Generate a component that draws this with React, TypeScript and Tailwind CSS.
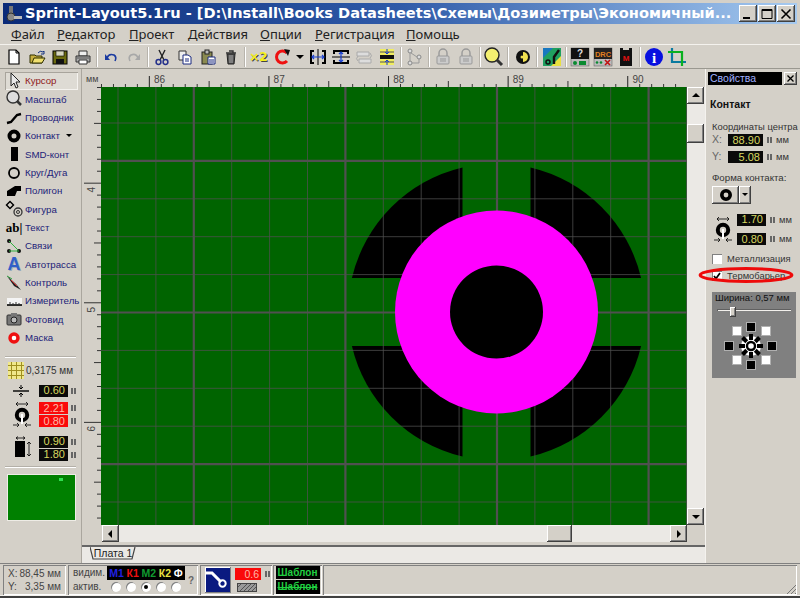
import React from "react";

const raised = "shadow-[inset_-1px_-1px_#404040,inset_1px_1px_#ffffff,inset_-2px_-2px_#808080]";
const sunken = "shadow-[inset_1px_1px_#808080,inset_-1px_-1px_#ffffff]";

function Ico({ w = 18, h = 18, children }: { w?: number; h?: number; children: React.ReactNode }) {
  return (
    <svg width={w} height={h} viewBox={`0 0 ${w} ${h}`} className="block shrink-0">
      {children}
    </svg>
  );
}

const NEW = <Ico><path d="M4 2h7l3 3v11H4z" fill="#fff" stroke="#000" strokeWidth="1.2" /><path d="M11 2v3h3" fill="none" stroke="#000" /></Ico>;
const OPEN = <Ico><path d="M2 7h5l1 1h6v7H2z" fill="#c8b040" stroke="#303000" /><path d="M4 15l2-5h11l-3 5z" fill="#f0e070" stroke="#303000" /><path d="M10 5q2-3 5-1l1-1v3h-3" fill="none" stroke="#103080" /></Ico>;
const SAVE = <Ico><rect x="2" y="3" width="14" height="13" fill="#6a6a10" stroke="#000" /><rect x="5" y="3" width="8" height="5" fill="#d8d8c0" stroke="#000" strokeWidth=".6" /><rect x="5" y="11" width="8" height="5" fill="#111" /></Ico>;
const PRINT = <Ico><path d="M5 3h8v5H5z" fill="#eee" stroke="#333" /><path d="M2 8h14v6H2z" fill="#aaa" stroke="#333" /><path d="M5 12h8v4H5z" fill="#fff" stroke="#333" /><path d="M3 10h12" stroke="#555" /></Ico>;
const UNDO = <Ico><path d="M5 10q2-5 7-3 3 2 1 6" fill="none" stroke="#1a3aa0" strokeWidth="1.6" /><path d="M3 6v6h5z" fill="#1a3aa0" /></Ico>;
const REDO = <Ico><path d="M13 10q-2-5-7-3-3 2-1 6" fill="none" stroke="#a8a8a8" strokeWidth="1.6" /><path d="M15 6v6h-5z" fill="#a8a8a8" /></Ico>;
const CUT = <Ico><path d="M6 2l5 10M12 2L7 12" stroke="#222" strokeWidth="1.4" /><circle cx="5.5" cy="14" r="2.4" fill="none" stroke="#24308a" strokeWidth="1.5" /><circle cx="12.5" cy="14" r="2.4" fill="none" stroke="#24308a" strokeWidth="1.5" /></Ico>;
const COPY = <Ico><path d="M3 3h7v9H3z" fill="#eee" stroke="#333" /><path d="M7 7h5l3 2v7H7z" fill="#fff" stroke="#1a2a80" /><path d="M9 11h4M9 13h4" stroke="#1a2a80" /></Ico>;
const PASTE = <Ico><rect x="3" y="4" width="10" height="12" fill="#8a8a50" stroke="#222" /><rect x="6" y="2" width="4" height="4" fill="#bbb" stroke="#222" /><path d="M9 9h7v7H9z" fill="#fff" stroke="#1a2a80" /><path d="M10 12h5M10 14h5" stroke="#1a2a80" /></Ico>;
const TRASH = <Ico><path d="M4 5h10M7 3h4v2" stroke="#333" strokeWidth="1.4" fill="none" /><path d="M5 6h8l-1 10H6z" fill="#555" stroke="#222" /><path d="M8 7v8M10 7v8" stroke="#aaa" /></Ico>;
const X2 = <span className="font-['DejaVu_Sans',sans-serif] font-bold text-[12px] leading-none text-[#f4f020] [text-shadow:1px_1px_0_#444]">×2</span>;
const ROTATE = <Ico><path d="M14 5A6 6 0 1 0 14 13" fill="none" stroke="#ee1010" strokeWidth="3" /><path d="M11 1l6 1-2 6z" fill="#111" /></Ico>;
const MIRH = <Ico w={20}><path d="M6 3H3v12h3M14 3h3v12h-3" fill="none" stroke="#000" strokeWidth="2" /><path d="M10 1v16" stroke="#000" /><path d="M4 9h12M6 7L4 9l2 2M14 7l2 2-2 2" fill="none" stroke="#1a40d0" strokeWidth="1.2" /></Ico>;
const MIRV = <Ico w={20}><path d="M3 6V3h14v3M3 12v3h14v-3" fill="none" stroke="#000" strokeWidth="2" /><path d="M1 9h18" stroke="#000" /><path d="M10 4v10M8 6l2-2 2 2M8 12l2 2 2-2" fill="none" stroke="#1a40d0" strokeWidth="1.2" /></Ico>;
const ROTG = <Ico w={20}><path d="M3 4h12v4H3zM5 11h12v4H5z" fill="#ddd" stroke="#aaa" /><path d="M16 5q3 3 0 5M4 13q-3-2 0-5" fill="none" stroke="#aaa" /></Ico>;
const ALIGN = <Ico w={20}><rect x="3" y="1" width="14" height="16" fill="#f0ec60" /><path d="M3 4h14M3 14h14" stroke="#555" /><rect x="3" y="7" width="14" height="4" fill="#111" /><path d="M10 1v5M8 4l2 2 2-2M10 17v-5M8 14l2-2 2 2" fill="none" stroke="#1a40d0" /></Ico>;
const GRAPH = <Ico><circle cx="4" cy="3" r="2" fill="#ddd" stroke="#888" /><circle cx="4" cy="15" r="2" fill="#ddd" stroke="#888" /><circle cx="13" cy="9" r="2" fill="#ddd" stroke="#888" /><path d="M4 5v8M5 5l6 4M6 15h7v-4" fill="none" stroke="#999" /></Ico>;
const LOCK1 = <Ico><path d="M5 8V5a4 4 0 0 1 8 0v3" fill="none" stroke="#999" strokeWidth="1.4" /><rect x="3" y="8" width="12" height="8" rx="1" fill="#ccc" stroke="#999" /><path d="M6 11h6M6 13h6" stroke="#999" /></Ico>;
const LENS = <Ico w={20} h={20}><circle cx="8" cy="8" r="7" fill="#f4f070" stroke="#222" strokeWidth="1.4" /><path d="M13 13l5 5" stroke="#333" strokeWidth="3" /></Ico>;
const HALF = <Ico><circle cx="9" cy="9" r="7" fill="#111" /><path d="M9 4a5 5 0 0 1 0 10z" fill="#f0e050" /><circle cx="8" cy="9" r="1.5" fill="#f0e050" /></Ico>;
const MAP = <Ico w={20} h={20}><rect x="1" y="1" width="18" height="18" fill="#20a060" /><path d="M1 1h10L1 11z" fill="#1878c0" /><path d="M19 19H9l10-10z" fill="#e8e040" /><path d="M17 3l-5 7v7" fill="none" stroke="#111" strokeWidth="2.4" /><circle cx="6" cy="15" r="2" fill="none" stroke="#111" strokeWidth="1.5" /></Ico>;
const DRCQ = <Ico w={20} h={20}><rect x="1" y="1" width="18" height="18" fill="#bbb" stroke="#555" strokeWidth=".5" /><rect x="1" y="1" width="18" height="11" fill="#111" /><text x="10" y="10" textAnchor="middle" fontSize="10" fontWeight="700" fill="#ddd" fontFamily="Liberation Sans">?</text><circle cx="5" cy="16" r="2" fill="#0a8a30" /><rect x="9" y="14" width="7" height="4" fill="#0a8a30" /></Ico>;
const DRC = <Ico w={20} h={20}><rect x="1" y="1" width="18" height="18" fill="#bbb" stroke="#555" strokeWidth=".5" /><rect x="1" y="1" width="18" height="11" fill="#222" /><text x="10" y="9.5" textAnchor="middle" fontSize="7.5" fontWeight="700" fill="#e08020" fontFamily="Liberation Sans">DRC</text><circle cx="4" cy="15.5" r="1.3" fill="#0a8a30" /><circle cx="8" cy="15.5" r="1.3" fill="#0a8a30" /><path d="M12 13l5 5M17 13l-5 5" stroke="#c01010" strokeWidth="1.6" /></Ico>;
const MASKM = <Ico w={14} h={20}><path d="M1 1h3v2h6V1h3v18H1z" fill="#111" /><text x="7" y="14" textAnchor="middle" fontSize="8" fontWeight="700" fill="#e01010" fontFamily="Liberation Sans">M</text></Ico>;
const INFO = <Ico w={20} h={20}><circle cx="10" cy="10" r="9" fill="#0810e0" /><text x="10" y="16" textAnchor="middle" fontSize="15" fontWeight="700" fill="#fff" fontFamily="Liberation Serif">i</text></Ico>;
const CROP = <Ico w={20} h={20}><path d="M5 1v14h14" fill="none" stroke="#0a7aa0" strokeWidth="2.2" /><path d="M1 5h14v14" fill="none" stroke="#0ab020" strokeWidth="2.2" /></Ico>;

type TB = { s?: string; i?: React.ReactNode };
const toolbar: TB[] = [
  { i: NEW }, { i: OPEN }, { i: SAVE }, { i: PRINT }, { s: "w-[5px]" },
  { i: UNDO }, { i: REDO }, { s: "w-[5px]" },
  { i: CUT }, { i: COPY }, { i: PASTE }, { i: TRASH }, { s: "w-[5px]" },
  { i: X2 }, { i: ROTATE }, { s: "drop" },
  { i: MIRH }, { i: MIRV }, { i: ROTG }, { i: ALIGN }, { s: "w-[5px]" },
  { i: GRAPH }, { s: "w-[5px]" },
  { i: LOCK1 }, { i: LOCK1 }, { s: "w-[5px]" },
  { i: LENS }, { s: "w-[6px]" },
  { i: HALF }, { s: "w-[6px]" },
  { i: MAP }, { s: "w-[5px]" },
  { i: DRCQ }, { i: DRC }, { i: MASKM }, { s: "w-[5px]" },
  { i: INFO }, { i: CROP },
];

const tools: { t: string; i: React.ReactNode }[] = [
  { t: "Курсор", i: <Ico><path d="M6 1v13l3-3 2 5 2-1-2-5h4z" fill="#e8e8e8" stroke="#222" /></Ico> },
  { t: "Масштаб", i: <Ico><circle cx="8" cy="7" r="6" fill="#ddd" stroke="#333" strokeWidth="1.4" /><path d="M12 11l4 4" stroke="#333" strokeWidth="2.5" /></Ico> },
  { t: "Проводник", i: <Ico><path d="M2 14l4-1 6-7 4-1" fill="none" stroke="#000" strokeWidth="2.4" /></Ico> },
  { t: "Контакт", i: <Ico><circle cx="9" cy="9" r="4.5" fill="none" stroke="#000" strokeWidth="4" /></Ico> },
  { t: "SMD-конт", i: <Ico><rect x="6" y="2" width="7" height="14" fill="#000" /></Ico> },
  { t: "Круг/Дуга", i: <Ico><circle cx="9" cy="9" r="5" fill="none" stroke="#000" strokeWidth="1.8" /></Ico> },
  { t: "Полигон", i: <Ico><path d="M2 14V9l8-5h6v5h-4l-2 5z" fill="#000" /></Ico> },
  { t: "Фигура", i: <Ico><rect x="2.5" y="2.5" width="5" height="5" transform="rotate(45 5 5)" fill="none" stroke="#000" strokeWidth="1.4" /><circle cx="13" cy="12" r="4" fill="none" stroke="#333" strokeWidth="1.3" /><circle cx="13" cy="12" r="1.5" fill="none" stroke="#333" /></Ico> },
  { t: "Текст", i: <span className="font-['Liberation_Serif',serif] font-bold text-[13px] leading-none text-black">ab|</span> },
  { t: "Связи", i: <Ico><circle cx="4" cy="4" r="2" fill="#111" /><circle cx="4" cy="14" r="2" fill="#111" /><circle cx="14" cy="14" r="2" fill="#111" /><path d="M4 4l9 9M4 14h10" stroke="#30b040" /></Ico> },
  { t: "Автотрасса", i: <span className="font-['Liberation_Sans',sans-serif] font-bold text-[18px] leading-none text-[#3060c8] [text-shadow:1px_1px_0_#9ab]">A</span> },
  { t: "Контроль", i: <Ico><path d="M2 2l9 8 5 6-7-4z" fill="#222" /><path d="M6 6l6 6" stroke="#d03030" /><path d="M2 2l5 3" stroke="#30a040" /></Ico> },
  { t: "Измеритель", i: <Ico w={17}><rect x="1" y="6" width="15" height="7" fill="#f4f4f4" /><path d="M1 13h15" stroke="#000" strokeWidth="1.6" /><path d="M4 13v-3M7 13v-2M10 13v-3M13 13v-2" stroke="#333" /></Ico> },
  { t: "Фотовид", i: <Ico><rect x="2" y="5" width="14" height="10" rx="1" fill="#777" stroke="#333" /><rect x="6" y="3" width="6" height="3" fill="#777" /><circle cx="9" cy="10" r="3" fill="#bbb" stroke="#222" /></Ico> },
  { t: "Маска", i: <Ico><circle cx="9" cy="9" r="4" fill="#fff" stroke="#ee1010" strokeWidth="3.4" /></Ico> },
];

function Dots() {
  return (
    <span className="flex gap-[1px] shrink-0">
      <span className="w-[2px] h-[6px] bg-[#666]" />
      <span className="w-[2px] h-[6px] bg-[#666]" />
    </span>
  );
}

function Val({ v, red, w = "w-[29px]" }: { v: string; red?: boolean; w?: string }) {
  return (
    <div className={`${w} h-[12px] flex items-center justify-end pr-[3px] text-[11px] leading-none ${red ? "bg-[#fa0a0a] text-[#ffb8a8]" : "bg-[#0a0a0a] text-[#d8d860]"}`}>
      {v}
    </div>
  );
}

function DonutIcon({ w = 18, h = 28 }: { w?: number; h?: number }) {
  return (
    <Ico w={w} h={h}>
      <path d="M3 3h12M3 3l2-2M3 3l2 2M15 3l-2-2M15 3l-2 2" fill="none" stroke="#000" strokeWidth=".8" />
      <circle cx="9" cy="14" r="5.2" fill="none" stroke="#000" strokeWidth="4" />
      <rect x="8" y="13" width="2" height="10" fill="#fff" />
      <path d="M0 24h6M6 24l-2-2M6 24l-2 2M18 24h-6M12 24l2-2M12 24l2 2" fill="none" stroke="#000" strokeWidth=".8" />
    </Ico>
  );
}

function Ruler() {
  const ticks = Array.from({ length: 49 }, (_, i) => i);
  return (
    <svg width={624} height={18} className="block shrink-0">
      <text x={4} y={13} fontSize="9" fill="#444" fontFamily="Liberation Sans">мм</text>
      {ticks.map((i) => {
        const x = 20 + i * 11.96 - 0.5;
        const k = i - 4;
        const major = k >= 0 && k % 10 === 0;
        const med = ((k % 10) + 10) % 10 === 5;
        return <line key={i} x1={x} x2={x} y1={major ? 7 : med ? 12 : 15} y2={18} stroke={major ? "#222" : "#333"} />;
      })}
      {[86, 87, 88, 89, 90].map((m, i) => (
        <text key={m} x={69 + i * 119.6 + 3} y={14} fontSize="10" fill="#444" fontFamily="Liberation Sans">{m}</text>
      ))}
    </svg>
  );
}

function VRuler() {
  const ticks = Array.from({ length: 37 }, (_, i) => i);
  return (
    <svg width={19} height={438} className="block shrink-0">
      {ticks.map((i) => {
        const y = 0.5 + i * 11.96;
        const k = i - 2 - 6;
        const mod = ((k % 10) + 10) % 10;
        const major = mod === 0;
        const med = mod === 5;
        return <line key={i} x1={major ? 2 : med ? 12 : 15} x2={19} y1={y} y2={y} stroke="#333" />;
      })}
      {[{ l: "4", y: 96 }, { l: "5", y: 216 }, { l: "6", y: 335 }].map((o) => (
        <text key={o.l} x={0} y={0} fontSize="10" fill="#444" fontFamily="Liberation Sans" textAnchor="end" transform={`translate(13 ${o.y + 4}) rotate(-90)`}>{o.l}</text>
      ))}
    </svg>
  );
}

function Board() {
  const cx = 395.5;
  const cy = 225;
  const vs = Array.from({ length: 16 }, (_, i) => 17 + i * 37.9);
  const hs = Array.from({ length: 12 }, (_, i) => 36 + i * 37.9);
  return (
    <svg width={586} height={438} className="block shrink-0 bg-[#006400]">
      <g transform={`translate(${cx} ${cy})`} fill="#000">
        {[0, 90, 180, 270].map((r) => (
          <path key={r} transform={`rotate(${r})`} d="M-34 -34V-144.6A148.5 148.5 0 0 0 -144.6 -34Z" />
        ))}
      </g>
      {vs.map((x, i) => (
        <line key={i} x1={x} x2={x} y1={0} y2={438} stroke="#505050" strokeOpacity={i % 4 === 2 ? 1 : 0.75} strokeWidth={i % 4 === 2 ? 2.2 : 1} />
      ))}
      {hs.map((y, i) => (
        <line key={i} y1={y} y2={y} x1={0} x2={586} stroke="#505050" strokeOpacity={i % 4 === 1 ? 1 : 0.75} strokeWidth={i % 4 === 1 ? 2.2 : 1} />
      ))}
      <circle cx={cx} cy={cy} r={101.5} fill="#ff00ff" />
      <circle cx={cx} cy={cy} r={46.5} fill="#000" />
    </svg>
  );
}

function Arrow({ d }: { d: "up" | "down" | "left" | "right" }) {
  const p = { up: "M1 6L5 2l4 4z", down: "M1 3h8L5 7z", left: "M6 1v8L2 5z", right: "M3 1v8l4-4z" }[d];
  return <svg width={10} height={10} viewBox="0 0 10 10"><path d={p} fill="#000" /></svg>;
}

function ThermalPanel() {
  const pads: [number, number, boolean][] = [
    [39, 35, true], [54, 39, false], [60, 54, true], [54, 68, false],
    [39, 73, true], [25, 68, false], [17, 54, true], [25, 39, false],
  ];
  return (
    <svg width={84} height={62} viewBox="0 24 84 62" className="block">
      {pads.map(([x, y, b], i) => (
        <g key={i}>
          <rect x={x - 5} y={y - 5} width={10} height={10} fill="#b0b0b0" />
          <rect x={x - 4} y={y - 4} width={8} height={8} fill={b ? "#000" : "#fff"} />
        </g>
      ))}
      <circle cx={39} cy={54} r={10} fill="#fff" />
      {Array.from({ length: 8 }, (_, i) => (
        <rect key={i} x={37} y={42} width={4} height={6} fill="#000" transform={`rotate(${i * 45} 39 54)`} />
      ))}
      <circle cx={39} cy={54} r={4} fill="none" stroke="#000" strokeWidth="2.4" />
    </svg>
  );
}

export default function App() {
  return (
    <div className="w-[800px] h-[598px] bg-[#d4d0c8] flex flex-col overflow-hidden font-['Liberation_Sans',sans-serif] text-black">
      {/* title bar */}
      <div className="mx-[3px] mt-[3px] h-[21px] shrink-0 flex items-center bg-gradient-to-r from-[#0a2a78] via-[#2f5aa8] to-[#a6caf0]">
        <div className="w-[21px] shrink-0 pl-[2px]">
          <Ico w={18} h={18}>
            <rect x="4" y="1" width="4" height="10" fill="#777" />
            <circle cx="6" cy="12" r="4" fill="#888" stroke="#333" />
            <rect x="9" y="11" width="8" height="3" fill="#bbb" />
          </Ico>
        </div>
        <div className="flex-1 min-w-0 whitespace-nowrap font-['DejaVu_Sans',sans-serif] font-bold text-[14.6px] leading-none text-white pl-[1px]">
          Sprint-Layout5.1ru - [D:\Install\Books Datasheets\Схемы\Дозиметры\Экономичный...
        </div>
        <div className="flex gap-[1px] pr-[2px] shrink-0">
          {["min", "max", "close"].map((b) => (
            <div key={b} className={`w-[18px] h-[17px] bg-[#d4d0c8] flex items-center justify-center ${raised}`}>
              <svg width={12} height={12} viewBox="0 0 12 12">
                {b === "min" && <rect x="1" y="9" width="7" height="2" fill="#000" />}
                {b === "max" && <path d="M1 1.5h10v9H1zM1 2.5h10" fill="none" stroke="#000" />}
                {b === "close" && <path d="M1.5 1.5l9 9M10.5 1.5l-9 9" stroke="#000" strokeWidth="1.6" />}
              </svg>
            </div>
          ))}
        </div>
      </div>

      {/* menu */}
      <div className="h-[20px] shrink-0 flex items-center pl-[11px] text-[13px] leading-none text-[#222] font-['Noto_Sans',sans-serif]">
        {[
          ["Ф", "айл", "w-[46px]"], ["Р", "едактор", "w-[72px]"], ["П", "роект", "w-[59px]"], ["Д", "ействия", "w-[72px]"],
          ["О", "пции", "w-[55px]"], ["Р", "егистрация", "w-[91px]"], ["П", "омощь", "w-[60px]"],
        ].map(([a, b, w]) => (
          <div key={a + b} className={`${w} shrink-0 whitespace-nowrap`}><span className="underline">{a}</span>{b}</div>
        ))}
      </div>

      {/* toolbar */}
      <div className="h-[25px] shrink-0 flex items-center pl-[2px] border-t border-t-[#f4f2ee] border-b border-b-[#9a9890]">
        {toolbar.map((t, i) =>
          t.s === "drop" ? (
            <div key={i} className="w-[13px] h-[22px] flex items-center justify-center"><Arrow d="down" /></div>
          ) : t.s ? (
            <div key={i} className={`${t.s} h-[20px] flex justify-center`}><div className="w-[2px] h-full bg-[#b8b4ac] border-r border-r-white" /></div>
          ) : (
            <div key={i} className="w-[23px] h-[22px] flex items-center justify-center">{t.i}</div>
          )
        )}
      </div>

      {/* main */}
      <div className="flex h-[494px] shrink-0">
        {/* left */}
        <div className="w-[82px] shrink-0 flex flex-col pt-[3px] border-r border-r-[#aaa69e]">
          <div className="flex flex-col pl-[5px] pr-[3px]">
            {tools.map((t, i) => (
              <div key={t.t} className={`h-[18.33px] flex items-center text-[9.7px] leading-none whitespace-nowrap ${i === 0 ? "bg-[#dedbd4] text-[#902020] shadow-[inset_1px_1px_#a8a49c,inset_-1px_-1px_#f4f2ee]" : "text-[#1c1c78]"}`}>
                <div className="w-[20px] pr-[2px] h-full shrink-0 flex items-center justify-center">{t.i}</div>
                <span>{t.t}</span>
                {t.t === "Контакт" && <span className="ml-[6px]"><svg width={6} height={4}><path d="M0 0h6L3 3z" fill="#000" /></svg></span>}
              </div>
            ))}
          </div>
          <div className="mx-[5px] mt-[9px] h-[2px] bg-[#b4b0a8] border-b border-b-white shrink-0" />
          <div className="flex items-center mt-[4px] pl-[8px] h-[17px] text-[10px] text-[#333]">
            <svg width={16} height={17} className="shrink-0">
              <rect width={16} height={17} fill="#f0e88a" />
              <path d="M0 3.5h16M0 8.5h16M0 13.5h16M3.5 0v17M8.5 0v17M13.5 0v17" stroke="#a09020" />
            </svg>
            <span className="ml-[2px] whitespace-nowrap">0,3175 мм</span>
          </div>
          <div className="flex items-center mt-[6px] pl-[13px]">
            <div className="w-[26px] shrink-0">
              <Ico w={16} h={12}>
                <path d="M0 6h16" stroke="#000" strokeWidth="1.4" />
                <path d="M8 0v4M6 2l2 2 2-2M8 12V8M6 10l2-2 2 2" fill="none" stroke="#000" />
              </Ico>
            </div>
            <Val v="0.60" />
            <span className="ml-[3px]"><Dots /></span>
          </div>
          <div className="flex items-center mt-[4px] pl-[13px]">
            <div className="w-[26px] shrink-0"><DonutIcon /></div>
            <div className="flex flex-col gap-[1px]">
              <div className="flex items-center"><Val v="2.21" red /><span className="ml-[3px]"><Dots /></span></div>
              <div className="flex items-center"><Val v="0.80" red /><span className="ml-[3px]"><Dots /></span></div>
            </div>
          </div>
          <div className="flex items-center mt-[7px] pl-[14px]">
            <div className="w-[25px] shrink-0">
              <Ico w={18} h={24}>
                <path d="M2 2h9M2 2l2-1.5M2 2l2 1.5M11 2L9 .5M11 2L9 3.5" fill="none" stroke="#000" strokeWidth=".8" />
                <rect x="1" y="5" width="10" height="16" fill="#000" />
                <path d="M15 6v14M13 8l2-2 2 2M13 18l2 2 2-2" fill="none" stroke="#000" strokeWidth=".8" />
              </Ico>
            </div>
            <div className="flex flex-col gap-[1px]">
              <div className="flex items-center"><Val v="0.90" /><span className="ml-[3px]"><Dots /></span></div>
              <div className="flex items-center"><Val v="1.80" /><span className="ml-[3px]"><Dots /></span></div>
            </div>
          </div>
          <div className="mx-[5px] mt-[5px] h-[2px] bg-[#b4b0a8] border-b border-b-white shrink-0" />
          <div className="ml-[7px] mt-[6px] w-[69px] h-[47px] bg-[#008000] border border-[#eeece6] flex justify-end shrink-0">
            <div className="w-[4px] h-[3px] mt-[3px] mr-[12px] bg-[#30e050]" />
          </div>
        </div>

        {/* middle */}
        <div className="w-[623px] shrink-0 flex flex-col">
          <Ruler />
          <div className="flex h-[438px] shrink-0">
            <VRuler />
            <Board />
            <div className="w-[18px] shrink-0 bg-[#ebe9e5] flex flex-col justify-between">
              <div className="flex flex-col">
                <div className={`w-[17px] h-[17px] bg-[#d4d0c8] flex items-center justify-center ${raised}`}><Arrow d="up" /></div>
                <div className={`mt-[20px] w-[17px] h-[19px] bg-[#d4d0c8] ${raised}`} />
              </div>
              <div className={`w-[17px] h-[17px] bg-[#d4d0c8] flex items-center justify-center ${raised}`}><Arrow d="down" /></div>
            </div>
          </div>
          <div className="flex h-[17px] shrink-0">
            <div className="w-[20px] shrink-0" />
            <div className="w-[585px] shrink-0 bg-[#ebe9e5] flex justify-between">
              <div className={`w-[17px] h-[17px] bg-[#d4d0c8] flex items-center justify-center ${raised}`}><Arrow d="left" /></div>
              <div className="flex">
                <div className={`w-[25px] h-[17px] bg-[#d4d0c8] mr-[98px] ${raised}`} />
                <div className={`w-[17px] h-[17px] bg-[#d4d0c8] flex items-center justify-center ${raised}`}><Arrow d="right" /></div>
              </div>
            </div>
          </div>
          <div className="h-[3px] shrink-0" />
          <div className="h-[18px] shrink-0 bg-[#ebe9e5] border-t-2 border-t-[#666] pl-[8px]">
            <div className="relative w-[46px] h-[13px] text-[10.5px] leading-[12px] text-[#222] text-center whitespace-nowrap">
              Плата 1
              <svg width={46} height={13} className="absolute left-0 top-0">
                <path d="M0 0l3 12h39l3-12" fill="none" stroke="#444" strokeWidth="1.2" />
              </svg>
            </div>
          </div>
        </div>

        {/* right */}
        <div className="flex-1 min-w-0 flex flex-col pt-[3px] border-l border-l-[#f4f2ee] text-[9.4px] text-[#333] relative">
          <div className="flex items-center pl-[2px] h-[13px] shrink-0">
            <div className="w-[74px] h-[13px] bg-black text-[#a0b0ff] text-[10.5px] leading-[13px] pl-[2px]">Свойства</div>
            <div className={`ml-[2px] w-[13px] h-[13px] flex items-center justify-center ${raised}`}>
              <svg width={7} height={7}><path d="M.5.5l6 6M6.5.5l-6 6" stroke="#000" strokeWidth="1.3" /></svg>
            </div>
          </div>
          <div className="mt-[13px] h-[12px] pl-[4px] font-bold text-[10.5px] leading-[12px] text-[#111]">Контакт</div>
          <div className="mt-[11px] h-[12px] pl-[6px] leading-[12px] whitespace-nowrap">Координаты центра</div>
          <div className="mt-[1px] flex items-center pl-[6px] h-[12px]">
            <span className="w-[16px] text-[#666] text-[10.5px]">X:</span>
            <Val v="88.90" w="w-[35px]" />
            <span className="ml-[4px]"><Dots /></span>
            <span className="ml-[4px]">мм</span>
          </div>
          <div className="mt-[5px] flex items-center pl-[6px] h-[12px]">
            <span className="w-[16px] text-[#666] text-[10.5px]">Y:</span>
            <Val v="5.08" w="w-[35px]" />
            <span className="ml-[4px]"><Dots /></span>
            <span className="ml-[4px]">мм</span>
          </div>
          <div className="mt-[9px] h-[12px] pl-[6px] leading-[12px] text-[9.7px]">Форма контакта:</div>
          <div className="mt-[2px] ml-[6px] flex h-[18px]">
            <div className={`w-[27px] h-[18px] flex items-center justify-center ${raised}`}>
              <svg width={14} height={14}><circle cx={7} cy={7} r={4.2} fill="none" stroke="#000" strokeWidth="3.6" /></svg>
            </div>
            <div className={`w-[12px] h-[18px] flex items-center justify-center ${raised}`}>
              <svg width={6} height={4}><path d="M0 0h6L3 3z" fill="#000" /></svg>
            </div>
          </div>
          <div className="mt-[11px] flex pl-[8px] h-[29px] items-center">
            <div className="w-[23px] shrink-0"><DonutIcon /></div>
            <div className="flex flex-col gap-[5px]">
              <div className="flex items-center"><Val v="1.70" /><span className="ml-[4px]"><Dots /></span><span className="ml-[4px]">мм</span></div>
              <div className="flex items-center"><Val v="0.80" /><span className="ml-[4px]"><Dots /></span><span className="ml-[4px]">мм</span></div>
            </div>
          </div>
          <div className="mt-[9px] flex items-center pl-[6px] h-[12px]">
            <div className={`w-[10px] h-[10px] bg-white ${sunken}`} />
            <span className="ml-[5px] whitespace-nowrap">Металлизация</span>
          </div>
          <div className="mt-[5px] flex items-center pl-[6px] h-[12px]">
            <div className={`w-[10px] h-[10px] bg-white flex items-center justify-center ${sunken}`}>
              <svg width={8} height={8}><path d="M1 4l2 2.5L7 1" fill="none" stroke="#000" strokeWidth="1.7" /></svg>
            </div>
            <span className="ml-[5px] whitespace-nowrap">Термобарьер</span>
          </div>
          <svg width={96} height={17} className="absolute left-[-8px] top-[198px] overflow-visible">
            <ellipse cx={48} cy={8} rx={46} ry={6.5} fill="none" stroke="#ee0a0a" strokeWidth="3" />
          </svg>
          <div className="mt-[10px] ml-[6px] w-[84px] h-[86px] bg-[#808080] flex flex-col">
            <div className="h-[12px] pl-[3px] leading-[12px] text-[9.5px] text-[#101010] whitespace-nowrap">Ширина: 0,57 мм</div>
            <div className="mt-[5px] mx-[5px] h-[5px] bg-[#f2f0ec] relative shadow-[inset_1px_1px_#606060]">
              <div className={`absolute left-[13px] top-[-2px] w-[6px] h-[10px] bg-[#d4d0c8] ${raised}`} />
            </div>
            <div className="mt-[5px]"><ThermalPanel /></div>
          </div>
        </div>
      </div>

      {/* status */}
      <div className="h-[32px] shrink-0 flex border-t border-t-[#808080] pt-[1px] text-[10px] text-[#444]">
        <div className={`w-[63px] ml-[3px] flex flex-col justify-center px-[5px] ${sunken}`}>
          <div className="flex justify-between h-[13px] leading-[13px] whitespace-nowrap"><span>X:</span><span>88,45 мм</span></div>
          <div className="flex justify-between h-[13px] leading-[13px] whitespace-nowrap"><span>Y:</span><span>3,35 мм</span></div>
        </div>
        <div className={`w-[130px] ml-[2px] flex items-center pl-[5px] ${sunken}`}>
          <div className="w-[34px] shrink-0">
            <div className="h-[14px] leading-[14px]">видим.</div>
            <div className="h-[14px] leading-[14px]">актив.</div>
          </div>
          <div className="flex flex-col">
            <div className="w-[78px] h-[14px] bg-black flex items-center justify-around px-[1px] text-[10.5px] font-bold leading-none">
              <span className="text-[#2020e0]">М1</span>
              <span className="text-[#f01010]">К1</span>
              <span className="text-[#109a30]">М2</span>
              <span className="text-[#e8e040]">К2</span>
              <span className="text-white">Ф</span>
            </div>
            <div className="w-[78px] h-[14px] flex items-center justify-around px-[1px]">
              {[0, 1, 2, 3, 4].map((i) => (
                <div key={i} className="w-[10px] h-[10px] rounded-full bg-white flex items-center justify-center shadow-[inset_1px_1px_#808080]">
                  {i === 2 && <div className="w-[4px] h-[4px] rounded-full bg-black" />}
                </div>
              ))}
            </div>
          </div>
          <span className="ml-[3px] font-bold text-[#666]">?</span>
        </div>
        <div className={`w-[72px] ml-[2px] flex items-center pl-[5px] ${sunken}`}>
          <div className="p-[1px] shadow-[inset_-1px_-1px_#808080,inset_1px_1px_#ffffff]">
            <svg width={24} height={24} className="block">
              <rect width={24} height={24} fill="#0a1a80" />
              <path d="M0 5h6l9 9" fill="none" stroke="#fff" strokeWidth="3" />
              <circle cx={16.5} cy={15.5} r={3.2} fill="none" stroke="#fff" strokeWidth="2" />
            </svg>
          </div>
          <div className="ml-[4px] flex flex-col gap-[3px]">
            <div className="flex items-center">
              <div className="w-[26px] h-[12px] bg-[#fa0a0a] text-[#ffb8a8] text-[10.5px] leading-[12px] text-right pr-[2px]">0.6</div>
              <span className="ml-[4px]"><Dots /></span>
            </div>
            <svg width={20} height={9} className="ml-[2px]">
              <rect width={20} height={9} fill="#999" />
              <path d="M-2 7l7-7M2 9l9-9M6 9l9-9M10 9l9-9M14 9l8-8" stroke="#333" strokeWidth=".7" />
              <rect x=".5" y=".5" width={19} height={8} fill="none" stroke="#444" />
            </svg>
          </div>
        </div>
        <div className={`w-[49px] ml-[1px] flex flex-col justify-center items-center gap-[1px] ${sunken}`}>
          <div className="w-[44px] h-[13px] bg-black text-[#20d040] text-[10px] font-bold leading-[13px] text-center">Шаблон</div>
          <div className="w-[44px] h-[14px] bg-black text-[#20d040] text-[10px] font-bold leading-[14px] text-center line-through">Шаблон</div>
        </div>
        <div className={`flex-1 ml-[1px] mr-[3px] relative ${sunken}`}>
          <svg width={12} height={12} className="absolute right-0 bottom-0">
            <path d="M11 2L2 11M11 6l-5 5M11 10l-1 1" stroke="#777" />
          </svg>
        </div>
      </div>
      <div className="h-[3px] shrink-0 bg-[#404040] border-t border-t-[#f4f2ee]" />
    </div>
  );
}
